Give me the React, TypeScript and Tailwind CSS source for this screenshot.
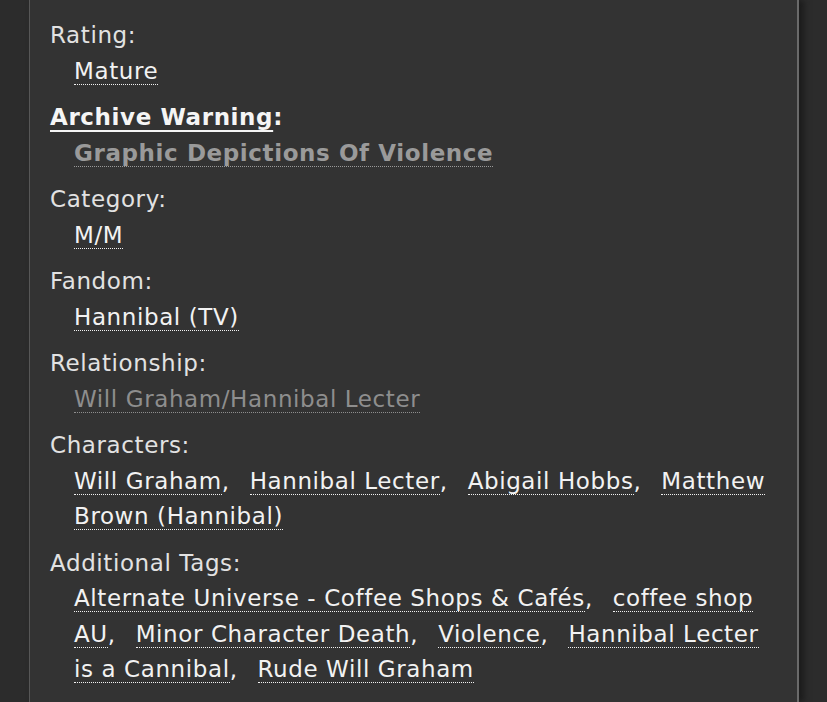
import React from "react";

const font = { fontFamily: '"DejaVu Sans", Verdana, sans-serif' };

function Tags({ items, tone = "normal" }: { items: string[]; tone?: "normal" | "bold" | "dim" }) {
  const cls =
    tone === "bold"
      ? "font-bold text-[#9a9a9a] border-b border-dotted border-[#9a9a9a]"
      : tone === "dim"
      ? "text-[#8e8e8e] border-b border-dotted border-[#8e8e8e]"
      : "text-[#f2f2f2] border-b border-dotted border-[#f2f2f2]";
  return (
    <dd className="ml-6 mb-[11px]">
      {items.map((t, i) => (
        <React.Fragment key={t}>
          <span className={cls}>{t}</span>
          {i < items.length - 1 ? (
            <>
              <span className="text-[#f2f2f2] mr-[12px]">,</span>{" "}
            </>
          ) : null}
        </React.Fragment>
      ))}
    </dd>
  );
}

function Label({ children }: { children: React.ReactNode }) {
  return <dt className="text-[#e2e2e2]">{children}</dt>;
}

export default function App() {
  return (
    <div className="min-h-screen bg-[#2c2c2c] pl-[29px] overflow-hidden" style={font}>
      <div className="w-[770px] h-[702px] bg-[#333333] border-l border-l-[#575757] border-r-2 border-r-[#6a6a6a] shadow-[5px_0_6px_#1c1c1c] pt-[18px] pl-5 pr-[18px] text-[23px] tracking-[0.6px] leading-[35.5px]">
        <dl>
          <Label>Rating:</Label>
          <Tags items={["Mature"]} />
          <dt className="font-bold text-[#f5f5f5]">
            <span className="underline decoration-2 underline-offset-[5px]">Archive Warning</span>:
          </dt>
          <Tags items={["Graphic Depictions Of Violence"]} tone="bold" />
          <Label>Category:</Label>
          <Tags items={["M/M"]} />
          <Label>Fandom:</Label>
          <Tags items={["Hannibal (TV)"]} />
          <Label>Relationship:</Label>
          <Tags items={["Will Graham/Hannibal Lecter"]} tone="dim" />
          <Label>Characters:</Label>
          <Tags items={["Will Graham", "Hannibal Lecter", "Abigail Hobbs", "Matthew Brown (Hannibal)"]} />
          <Label>Additional Tags:</Label>
          <Tags
            items={[
              "Alternate Universe - Coffee Shops & Cafés",
              "coffee shop AU",
              "Minor Character Death",
              "Violence",
              "Hannibal Lecter is a Cannibal",
              "Rude Will Graham",
            ]}
          />
        </dl>
      </div>
    </div>
  );
}
